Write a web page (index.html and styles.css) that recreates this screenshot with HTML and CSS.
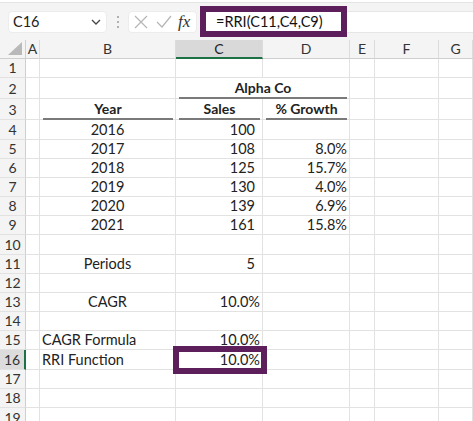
FILE: index.html
```html
<!DOCTYPE html>
<html>
<head>
<meta charset="utf-8">
<link rel="stylesheet" href="styles.css">
</head>
<body>
<div class="app">
  <div class="toolbar">
    <div class="namebox">
      <span class="ref">C16</span>
      <svg class="chev" width="10" height="6" viewBox="0 0 10 6"><path d="M1 1 L5 5 L9 1" fill="none" stroke="#444" stroke-width="1.3"/></svg>
    </div>
    <div class="dots"><i></i><i></i><i></i></div>
    <div class="fnbox">
      <svg width="14" height="14" viewBox="0 0 14 14"><path d="M1 1 L13 13 M13 1 L1 13" stroke="#b5b5b5" stroke-width="1.2" fill="none"/></svg>
      <svg width="16" height="14" viewBox="0 0 16 14"><path d="M1 7 L6 12 L15 1" stroke="#b5b5b5" stroke-width="1.2" fill="none"/></svg>
      <span class="fx">fx</span>
    </div>
    <div class="formula">
      <div class="fbox">=RRI(C11,C4,C9)</div>
    </div>
  </div>
  <div class="sheet">
    <div class="corner"><span class="tri"></span></div>
    <div class="ch">A</div><div class="ch">B</div><div class="ch sel">C</div><div class="ch">D</div><div class="ch">E</div><div class="ch">F</div><div class="ch">G</div>

    <div class="rh">1</div><div class="c"></div><div class="c"></div><div class="c"></div><div class="c"></div><div class="c"></div><div class="c"></div><div class="c"></div>

    <div class="rh">2</div><div class="c"></div><div class="c"></div><div class="c span2 b ctr"><span class="ul">Alpha Co</span></div><div class="c"></div><div class="c"></div><div class="c"></div>

    <div class="rh">3</div><div class="c"></div><div class="c b ctr"><span class="ul">Year</span></div><div class="c b ctr"><span class="ul">Sales</span></div><div class="c b ctr"><span class="ul">% Growth</span></div><div class="c"></div><div class="c"></div><div class="c"></div>

    <div class="rh">4</div><div class="c"></div><div class="c ctr">2016</div><div class="c num">100</div><div class="c pct"></div><div class="c"></div><div class="c"></div><div class="c"></div>

    <div class="rh">5</div><div class="c"></div><div class="c ctr">2017</div><div class="c num">108</div><div class="c pct">8.0%</div><div class="c"></div><div class="c"></div><div class="c"></div>

    <div class="rh">6</div><div class="c"></div><div class="c ctr">2018</div><div class="c num">125</div><div class="c pct">15.7%</div><div class="c"></div><div class="c"></div><div class="c"></div>

    <div class="rh">7</div><div class="c"></div><div class="c ctr">2019</div><div class="c num">130</div><div class="c pct">4.0%</div><div class="c"></div><div class="c"></div><div class="c"></div>

    <div class="rh">8</div><div class="c"></div><div class="c ctr">2020</div><div class="c num">139</div><div class="c pct">6.9%</div><div class="c"></div><div class="c"></div><div class="c"></div>

    <div class="rh">9</div><div class="c"></div><div class="c ctr">2021</div><div class="c num">161</div><div class="c pct">15.8%</div><div class="c"></div><div class="c"></div><div class="c"></div>

    <div class="rh">10</div><div class="c"></div><div class="c"></div><div class="c"></div><div class="c"></div><div class="c"></div><div class="c"></div><div class="c"></div>

    <div class="rh">11</div><div class="c"></div><div class="c ctr">Periods</div><div class="c num">5</div><div class="c"></div><div class="c"></div><div class="c"></div><div class="c"></div>

    <div class="rh">12</div><div class="c"></div><div class="c"></div><div class="c"></div><div class="c"></div><div class="c"></div><div class="c"></div><div class="c"></div>

    <div class="rh">13</div><div class="c"></div><div class="c ctr">CAGR</div><div class="c pct">10.0%</div><div class="c"></div><div class="c"></div><div class="c"></div><div class="c"></div>

    <div class="rh">14</div><div class="c"></div><div class="c"></div><div class="c"></div><div class="c"></div><div class="c"></div><div class="c"></div><div class="c"></div>

    <div class="rh">15</div><div class="c"></div><div class="c left">CAGR Formula</div><div class="c pct">10.0%</div><div class="c"></div><div class="c"></div><div class="c"></div><div class="c"></div>

    <div class="rh rsel">16</div><div class="c"></div><div class="c left">RRI Function</div><div class="c pct active">10.0%</div><div class="c"></div><div class="c"></div><div class="c"></div><div class="c"></div>

    <div class="rh">17</div><div class="c"></div><div class="c"></div><div class="c"></div><div class="c"></div><div class="c"></div><div class="c"></div><div class="c"></div>

    <div class="rh">18</div><div class="c"></div><div class="c"></div><div class="c"></div><div class="c"></div><div class="c"></div><div class="c"></div><div class="c"></div>

    <div class="rh">19</div><div class="c"></div><div class="c"></div><div class="c"></div><div class="c"></div><div class="c"></div><div class="c"></div><div class="c"></div>
  </div>
</div>
</body>
</html>
```
FILE: styles.css
```css
* { box-sizing: border-box; }
html, body { margin: 0; padding: 0; }
body {
  width: 473px;
  height: 421px;
  overflow: hidden;
  background: #fff;
  font-family: "Lato", "Open Sans", sans-serif;
  color: #222;
}
.app { width: 473px; }

.toolbar {
  height: 38px;
  background: #f4f4f4;
  border-top: 1px solid #e4e4e4;
  margin-top: 2px;
  display: flex;
  align-items: center;
  padding-left: 8px;
  position: relative;
}
.namebox {
  width: 99px;
  height: 22px;
  background: #fff;
  border-radius: 4px;
  border: 1px solid #ececec;
  display: flex;
  align-items: center;
  justify-content: space-between;
  padding: 0 5px 0 4px;
  font-size: 14.5px;
}
.chev { margin-top: 1px; }
.dots {
  width: 21px;
  display: flex;
  flex-direction: column;
  align-items: center;
  gap: 3px;
}
.dots i {
  width: 2px; height: 2px; background: #b0b0b0; display: block;
}
.fnbox {
  width: 69px;
  height: 22px;
  background: #fff;
  border-radius: 4px;
  border: 1px solid #ececec;
  display: flex;
  align-items: center;
  gap: 8px;
  padding-left: 5px;
}
.fx {
  font-family: "Liberation Serif", "DejaVu Serif", serif;
  font-style: italic;
  font-size: 17px;
  color: #333;
  margin-left: -2px;
}
.formula {
  flex: 1;
  height: 22px;
  margin-left: 3px;
  background: #fff;
  border-top: 1px solid #e6e6e6;
  border-bottom: 1px solid #e6e6e6;
  position: relative;
}
.fbox {
  position: absolute;
  left: 0;
  top: -6px;
  width: 147px;
  height: 31px;
  border: 6px solid #5c1f5c;
  background: #fff;
  font-size: 14.5px;
  padding-left: 10px;
  line-height: 19px;
  color: #111;
}

.sheet {
  display: grid;
  grid-template-columns: 26px 14px 136px 87px 87px 25px 64px 34px;
  grid-template-rows: 19px 19px 21px 21px 20px 19px 19px 19px 19px 19px 20px 19px 19px 19px 19px 19px 20px 19px 19px 20px;
  font-size: 14.5px;
}
.corner {
  background: #f4f4f4;
  border-right: 1px solid #cfcfcf;
  border-bottom: 1px solid #cfcfcf;
  position: relative;
}
.tri {
  position: absolute;
  right: 3px;
  bottom: 3px;
  width: 0; height: 0;
  border-left: 14px solid transparent;
  border-bottom: 13px solid #b9b9b9;
}
.ch {
  background: #f4f4f4;
  border-bottom: 1px solid #cfcfcf;
  border-right: 1px solid #dcdcdc;
  text-align: center;
  font-size: 14px;
  line-height: 18px;
  color: #333;
}
.ch.sel {
  background: #d9d9d9;
  border-bottom: 2px solid #1e7145;
  color: #222;
}
.rh {
  background: #f4f4f4;
  border-right: 1px solid #cfcfcf;
  border-bottom: 1px solid #e2e2e2;
  font-size: 14px;
  display: flex;
  align-items: flex-end;
  justify-content: center;
  padding-bottom: 1px;
  color: #333;
}
.rh.rsel {
  background: #dcdcdc;
  border-right: 2px solid #1e7145;
}
.c {
  border-right: 1px solid #e2e2e2;
  border-bottom: 1px solid #e2e2e2;
  display: flex;
  align-items: flex-end;
  padding-bottom: 1px;
  white-space: nowrap;
  position: relative;
}
.span2 { grid-column: span 2; }
.b { font-weight: 700; font-size: 14px; }
.ctr { justify-content: center; }
.left { justify-content: flex-start; padding-left: 2px; }
.num { justify-content: flex-end; padding-right: 7px; }
.pct { justify-content: flex-end; padding-right: 2px; }
.ul {
  position: absolute;
  left: 3px;
  right: 2px;
  bottom: -1px;
  border-bottom: 2px solid #7a7a7a;
  text-align: center;
  padding-bottom: 1px;
}
.active { z-index: 2; }
.active::after {
  content: "";
  position: absolute;
  left: -3px;
  top: -4px;
  right: -5px;
  bottom: -5px;
  border: 6px solid #5c1f5c;
}
```
